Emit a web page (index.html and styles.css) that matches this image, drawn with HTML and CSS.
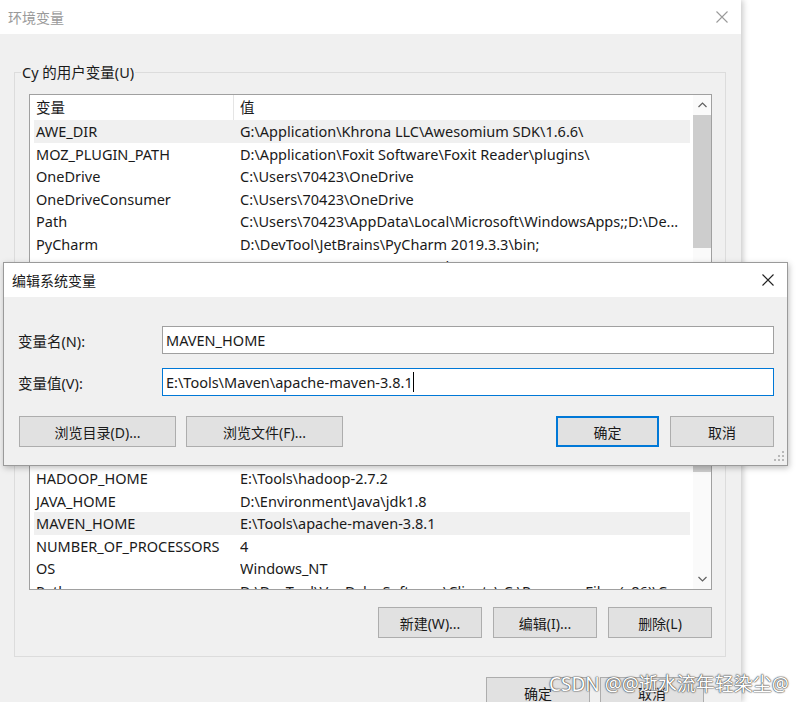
FILE: index.html
```html
<!DOCTYPE html>
<html>
<head>
<meta charset="utf-8">
<title>环境变量</title>
<link rel="stylesheet" href="styles.css">
</head>
<body>
<div class="win">
  <div class="titlebar">
    <span class="title">环境变量</span>
    <svg class="close" width="12" height="12" viewBox="0 0 12 12"><path d="M0.5 0.5L11.5 11.5M11.5 0.5L0.5 11.5" stroke="#9a9a9a" stroke-width="1.1" fill="none"/></svg>
  </div>
  <fieldset class="group">
    <legend>Cy 的用户变量(U)</legend>
    <div class="list">
      <div class="cols">
        <div class="head"><span class="h1">变量</span><span class="h2">值</span></div>
        <div class="row sel"><span>AWE_DIR</span><span>G:\Application\Khrona LLC\Awesomium SDK\1.6.6\</span></div>
        <div class="row"><span>MOZ_PLUGIN_PATH</span><span>D:\Application\Foxit Software\Foxit Reader\plugins\</span></div>
        <div class="row"><span>OneDrive</span><span>C:\Users\70423\OneDrive</span></div>
        <div class="row"><span>OneDriveConsumer</span><span>C:\Users\70423\OneDrive</span></div>
        <div class="row"><span>Path</span><span>C:\Users\70423\AppData\Local\Microsoft\WindowsApps;;D:\De...</span></div>
        <div class="row"><span>PyCharm</span><span>D:\DevTool\JetBrains\PyCharm 2019.3.3\bin;</span></div>
        <div class="row"><span>TEMP</span><span>C:\Users\70423\AppData\Local\Temp</span></div>
        <div class="gap"></div>
        <div class="row"><span>HADOOP_HOME</span><span>E:\Tools\hadoop-2.7.2</span></div>
        <div class="row"><span>JAVA_HOME</span><span>D:\Environment\Java\jdk1.8</span></div>
        <div class="row sel"><span>MAVEN_HOME</span><span>E:\Tools\apache-maven-3.8.1</span></div>
        <div class="row"><span>NUMBER_OF_PROCESSORS</span><span>4</span></div>
        <div class="row"><span>OS</span><span>Windows_NT</span></div>
        <div class="row"><span>Path</span><span>D:\DevTool\VanDyke Software\Clients\;C:\Program Files (x86)\Common Files\</span></div>
      </div>
      <div class="vscroll">
        <div class="arrow"><svg width="9" height="6" viewBox="0 0 9 6"><path d="M0.5 5L4.5 1L8.5 5" stroke="#606060" stroke-width="1.2" fill="none"/></svg></div>
        <div class="thumb"></div>
        <div class="thumb2"></div>
        <div class="track"></div>
        <div class="arrow"><svg width="9" height="6" viewBox="0 0 9 6"><path d="M0.5 1L4.5 5L8.5 1" stroke="#606060" stroke-width="1.2" fill="none"/></svg></div>
      </div>
    </div>
    <div class="btns">
      <button>新建(W)...</button>
      <button>编辑(I)...</button>
      <button>删除(L)</button>
    </div>
  </fieldset>
  <div class="btns winbtns">
    <button>确定</button>
    <button>取消</button>
  </div>
</div>

<div class="dlg">
  <div class="dtitle">
    <span>编辑系统变量</span>
    <svg class="close" width="12" height="12" viewBox="0 0 12 12"><path d="M0.5 0.5L11.5 11.5M11.5 0.5L0.5 11.5" stroke="#222" stroke-width="1.1" fill="none"/></svg>
  </div>
  <div class="dbody">
    <div class="field">
      <label>变量名(N):</label>
      <div class="input">MAVEN_HOME</div>
    </div>
    <div class="field">
      <label>变量值(V):</label>
      <div class="input focus"><span class="caret">E:\Tools\Maven\apache-maven-3.8.1</span></div>
    </div>
    <div class="dbtns">
      <div class="left">
        <button class="wide">浏览目录(D)...</button>
        <button class="wide">浏览文件(F)...</button>
      </div>
      <div class="right">
        <button class="def">确定</button>
        <button>取消</button>
      </div>
    </div>
  </div>
  <svg class="grip" width="11" height="11" viewBox="0 0 11 11">
    <rect x="8" y="0" width="2" height="2" fill="#b8b8b8"/>
    <rect x="4" y="4" width="2" height="2" fill="#b8b8b8"/>
    <rect x="8" y="4" width="2" height="2" fill="#b8b8b8"/>
    <rect x="0" y="8" width="2" height="2" fill="#b8b8b8"/>
    <rect x="4" y="8" width="2" height="2" fill="#b8b8b8"/>
    <rect x="8" y="8" width="2" height="2" fill="#b8b8b8"/>
  </svg>
</div>

<div class="mark">CSDN @@逝水流年轻染尘@</div>
</body>
</html>
```

FILE: styles.css
```css
body{
margin:0;
background:#fff;
font-family:"Noto Sans","Noto Sans CJK SC",sans-serif;
font-size:14.5px;
color:#1a1a1a;
}
button{
font:inherit;
font-size:14px;
color:#1a1a1a;
background:#e1e1e1;
border:1px solid #adadad;
height:31px;
padding:0;
}

/* back window */
.win{
width:741px;
height:702px;
overflow:hidden;
background:#f0f0f0;
box-shadow:2px 0 6px rgba(0,0,0,.22);
}
.titlebar{
height:34px;
background:#fff;
display:flex;
align-items:center;
justify-content:space-between;
padding:0 13px 0 8px;
}
.titlebar .title{color:#9a9a9a;font-size:14px;}
.group{
margin:28px 15px 0 14px;
padding:12px 13px 18px 14px;
border:1px solid #dcdcdc;
min-width:0;
}
.group legend{
padding:0 1px;
margin-left:-8px;
line-height:20px;
}
.list{
height:496px;
box-sizing:border-box;
border:1px solid #a0a0a0;
background:#fff;
display:flex;
overflow:hidden;
}
.cols{
flex:1;
min-width:0;
overflow:hidden;
}
.head{
height:25px;
display:flex;
line-height:25px;
}
.head .h1{
width:197px;
padding-left:6px;
border-right:1px solid #e5e5e5;
}
.head .h2{padding-left:6px;}
.row{
display:grid;
grid-template-columns:206px 1fr;
height:22.5px;
line-height:22px;
margin:0 3px 0 4px;
white-space:nowrap;
}
.row span{overflow:hidden;}
.row span:first-child{padding-left:2px;}
.row.sel{background:#f0f0f0;}
.gap{height:189.5px;}
.vscroll{
width:18px;
display:flex;
flex-direction:column;
background:#fafafa;
}
.arrow{
height:20px;
display:flex;
align-items:center;
justify-content:center;
}
.thumb{height:133px;background:#cdcdcd;}
.thumb2{height:17px;background:#cdcdcd;margin-top:207px;}
.track{flex:1;}
.btns{
display:flex;
justify-content:flex-end;
gap:11px;
margin-top:17px;
}
.btns button{width:104px;}
.winbtns{
margin:20px 37px 0 0;
gap:10px;
}

/* edit dialog */
.dlg{
position:absolute;
left:3px;
top:262px;
width:785px;
height:204px;
box-sizing:border-box;
border:1px solid #9a9a9a;
background:#f0f0f0;
box-shadow:1px 2px 6px rgba(0,0,0,.25);
}
.dtitle{
height:34px;
background:#fff;
display:flex;
align-items:center;
justify-content:space-between;
padding:0 13px 0 8px;
font-size:14px;
}
.dbody{padding:29px 13px 0 14px;}
.field{
display:flex;
align-items:center;
margin-bottom:14px;
}
.field label{width:144px;}
.input{
flex:1;
height:28px;
box-sizing:border-box;
border:1px solid #a0a0a0;
background:#fff;
line-height:26px;
padding-left:3px;
}
.input.focus{border-color:#0078d7;}
.caret{border-right:1px solid #000;}
.dbtns{
display:flex;
justify-content:space-between;
margin-top:20px;
}
.dbtns .left,.dbtns .right{display:flex;}
.dbtns .left{gap:10px;margin-left:1px;}
.dbtns .right{gap:11px;}
.dbtns button{width:104px;}
.dbtns button.wide{width:157px;}
.dbtns button.def{width:103px;border:2px solid #0078d7;}
.grip{
position:absolute;
right:2px;
bottom:3px;
}

.mark{
position:absolute;
left:549px;
top:669px;
font-size:19px;
color:#fff;
text-shadow:0 0 1px #444,0 0 1px #444,0 0 2px #666;
white-space:nowrap;
}
```
